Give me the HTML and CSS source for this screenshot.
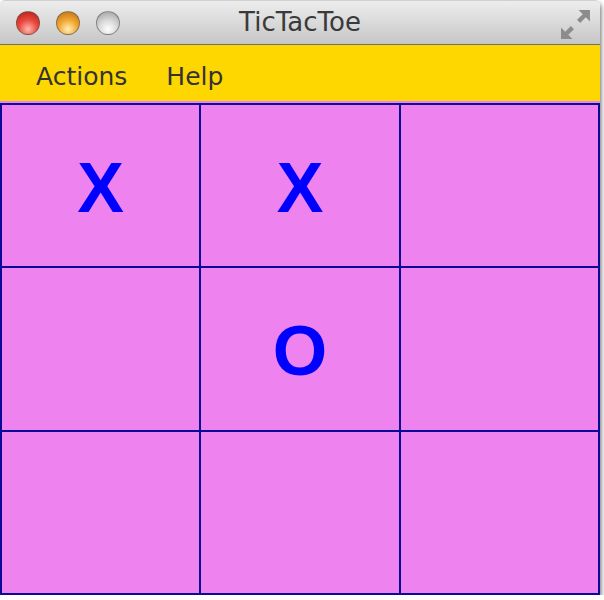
FILE: index.html
```html
<!DOCTYPE html>
<html>
<head>
<meta charset="utf-8">
<link rel="stylesheet" href="styles.css">
</head>
<body>
<div class="window">
  <div class="titlebar">
    <div class="lights">
      <span class="light red"></span>
      <span class="light orange"></span>
      <span class="light gray"></span>
    </div>
    <div class="title">TicTacToe</div>
    <svg class="resize" width="31" height="31" viewBox="0 0 30 30">
      <path d="M29 1 L29 12 L25 8 L19.5 13.5 L16.5 10.5 L22 5 L18 1 Z" fill="#8c8c8c"/>
      <path d="M1 29 L1 18 L5 22 L10.5 16.5 L13.5 19.5 L8 25 L12 29 Z" fill="#8c8c8c"/>
    </svg>
  </div>
  <div class="menubar">
    <span class="menu">Actions</span>
    <span class="menu">Help</span>
  </div>
  <div class="boardwrap">
    <div class="board">
      <div class="cell">X</div>
      <div class="cell">X</div>
      <div class="cell"></div>
      <div class="cell"></div>
      <div class="cell">O</div>
      <div class="cell"></div>
      <div class="cell"></div>
      <div class="cell"></div>
      <div class="cell"></div>
    </div>
  </div>
</div>
</body>
</html>
```
FILE: styles.css
```css
html, body {
  margin: 0;
  padding: 0;
  background: #ffffff;
}
.window {
  width: 600px;
  height: 595px;
  display: flex;
  flex-direction: column;
  border-radius: 5px 5px 0 0;
  box-shadow: 1px 3px 5px rgba(0,0,0,0.6);
  overflow: hidden;
  font-family: "DejaVu Sans", "Liberation Sans", sans-serif;
}
.titlebar {
  height: 45px;
  box-sizing: border-box;
  border-top: 1px solid #d0d0d0;
  border-bottom: 1px solid #6f6f6f;
  background: linear-gradient(#ededed, #d6d6d6 60%, #c6c6c6);
  display: flex;
  align-items: center;
  position: relative;
  border-radius: 5px 5px 0 0;
}
.lights {
  display: flex;
  gap: 16px;
  padding-left: 16px;
  padding-top: 1px;
}
.light {
  width: 24px;
  height: 24px;
  border-radius: 50%;
  box-sizing: border-box;
  border: 1px solid rgba(90,90,90,0.6);
}
.red {
  background: radial-gradient(circle at 50% 78%, #ffb8b0 0%, #ea4a3f 45%, #b01a10 100%);
}
.orange {
  background: radial-gradient(circle at 50% 78%, #fff0b8 0%, #f2a832 45%, #b66a10 100%);
}
.gray {
  background: radial-gradient(circle at 50% 78%, #ffffff 0%, #d8d8d8 45%, #9a9a9a 100%);
}
.title {
  position: absolute;
  left: 0;
  right: 0;
  top: 6px;
  text-align: center;
  font-size: 26px;
  color: #3a3a3a;
  font-family: "DejaVu Sans", sans-serif;
}
.resize {
  position: absolute;
  right: 9px;
  top: 8px;
}
.menubar {
  height: 56px;
  background: #ffd700;
  display: flex;
  align-items: center;
  padding-left: 36px;
  gap: 39px;
  padding-top: 6px;
  box-sizing: border-box;
}
.menu {
  font-size: 25px;
  color: #333333;
}
.boardwrap {
  flex: 1;
  background: #ee82ee;
  padding-top: 2px;
  display: flex;
}
.board {
  flex: 1;
  display: grid;
  grid-template-columns: 1fr 1fr 1fr;
  grid-template-rows: 1fr 1fr 1fr;
  gap: 2px;
  padding: 2px;
  background: #0a0a99;
}
.cell {
  background: #ee82ee;
  color: #0000ff;
  font-family: "Liberation Sans", Arial, sans-serif;
  font-weight: bold;
  font-size: 70px;
  display: flex;
  align-items: center;
  justify-content: center;
  padding-top: 4px;
}
```
